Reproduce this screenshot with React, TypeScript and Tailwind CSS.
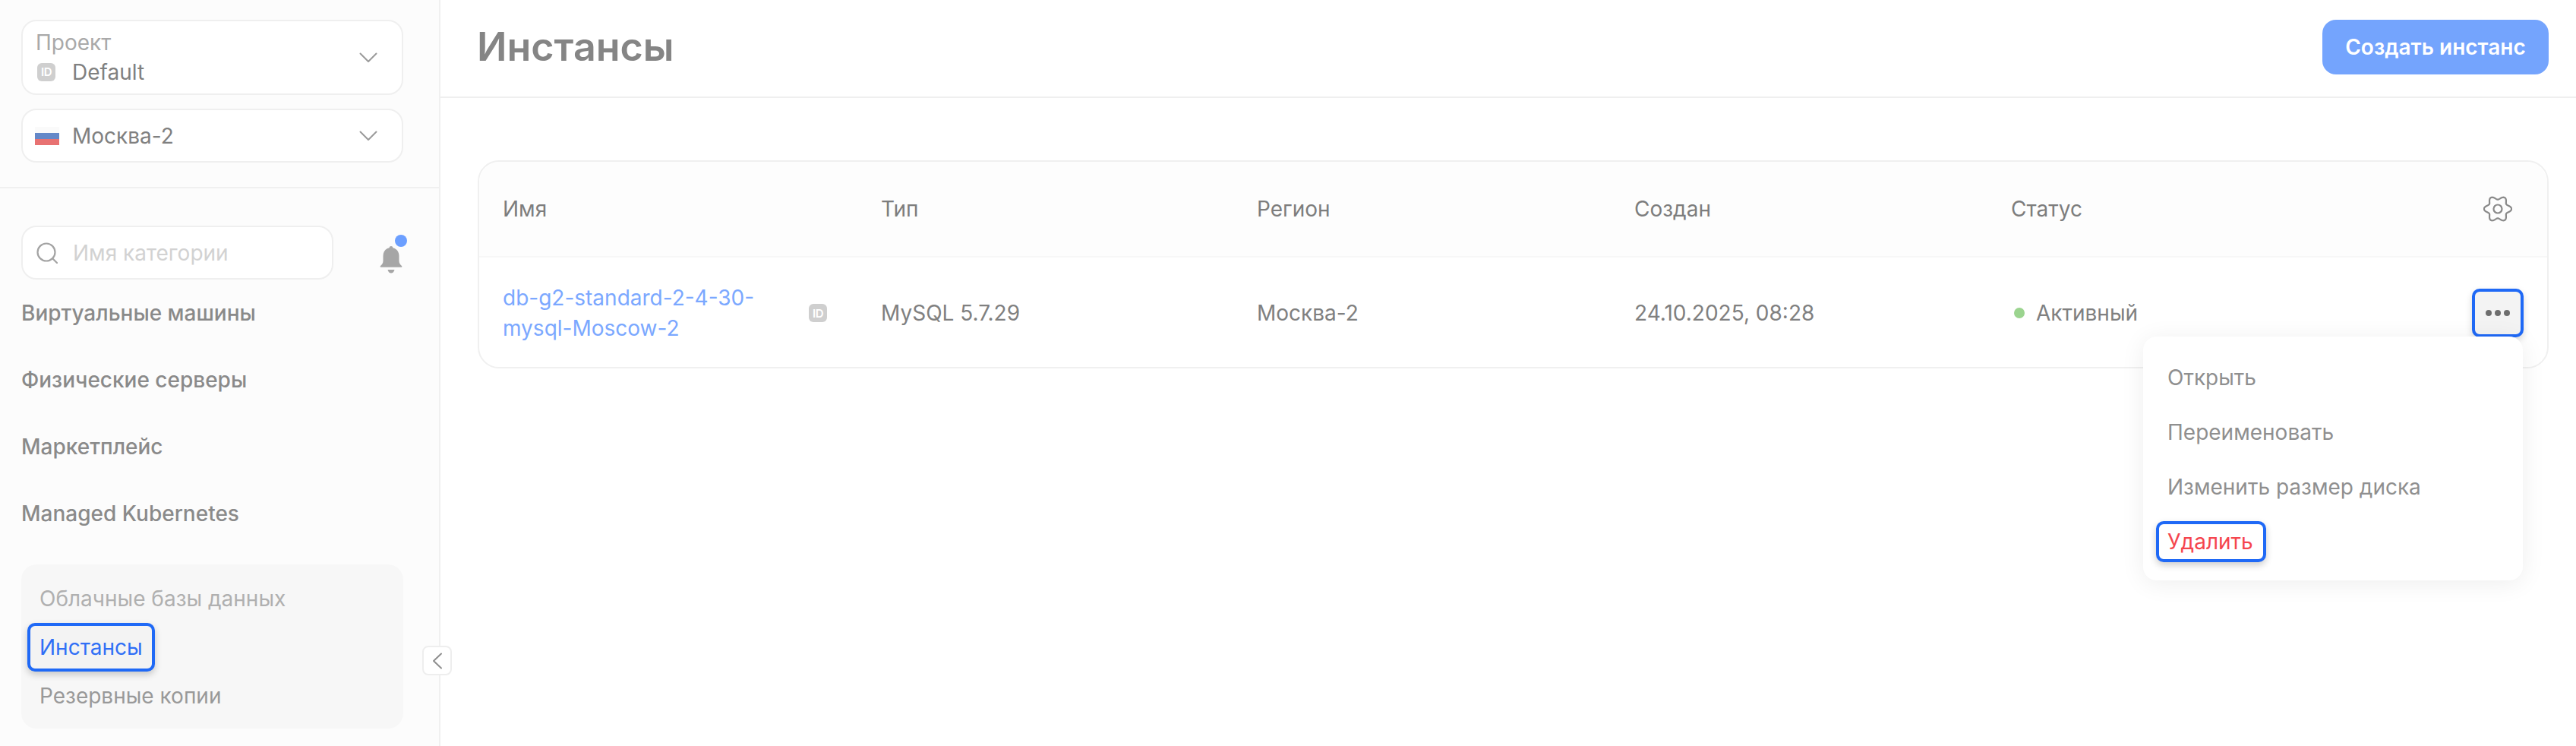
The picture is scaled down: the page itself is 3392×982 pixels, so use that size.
const IdBadge = ({ className }: { className: string }) => (
  <span className={`flex items-center justify-center rounded-[6px] bg-[#cfcfcf] text-[15px] font-semibold leading-none tracking-[-0.5px] text-white ${className}`}>ID</span>
);

const Chevron = () => (
  <svg width="24" height="14" viewBox="0 0 24 14" fill="none" className="shrink-0">
    <path d="M1.5 1.5 12 12 22.5 1.5" stroke="#9a9a9a" strokeWidth="2" strokeLinecap="round" strokeLinejoin="round" />
  </svg>
);

const NavRow = ({ label }: { label: string }) => (
  <div className="flex h-[88px] items-center text-[28px] font-medium text-[#8a8a8a]">{label}</div>
);

const gearPath = Array.from({ length: 120 }, (_, i) => {
  const t = (i / 120) * Math.PI * 2;
  const r = 15.5 + 2.6 * Math.cos(6 * t);
  return `${i === 0 ? "M" : "L"}${(19 + r * Math.cos(t)).toFixed(2)} ${(18 + r * 0.95 * Math.sin(t)).toFixed(2)}`;
}).join(" ") + "Z";

const Gear = () => (
  <svg width="38" height="36" viewBox="0 0 38 36" fill="none" className="shrink-0">
    <path d={gearPath} stroke="#8a8a8a" strokeWidth="2.2" strokeLinejoin="round" />
    <circle cx="19" cy="18" r="5.5" stroke="#8a8a8a" strokeWidth="2.2" />
  </svg>
);

export default function App() {
  return (
    <div className="relative flex h-[982px] w-[3392px] overflow-hidden bg-white font-['Inter',sans-serif]">
      <aside className="relative w-[580px] shrink-0 border-r-2 border-[#f0f0f0] bg-[#fcfcfc]">
        <div className="flex h-[248px] flex-col gap-[18px] border-b-2 border-[#f0f0f0] px-[28px] pt-[26px]">
          <div className="flex h-[99px] w-[503px] items-center justify-between rounded-[20px] border-2 border-[#efefef] bg-white pl-[17px] pr-[32px]">
            <div>
              <div className="text-[28px] leading-[34px] text-[#a9a9a9]">Проект</div>
              <div className="mt-[4px] flex items-center">
                <IdBadge className="ml-[2px] h-[24px] w-[24px]" />
                <span className="ml-[22px] text-[28px] leading-[36px] text-[#808080]">Default</span>
              </div>
            </div>
            <Chevron />
          </div>
          <div className="flex h-[71px] w-[503px] items-center justify-between rounded-[20px] border-2 border-[#efefef] bg-white pl-[16px] pr-[32px]">
            <div className="flex items-center">
              <div className="flex h-[24px] w-[32px] flex-col">
                <span className="h-[8px] bg-[#fafafa]" />
                <span className="h-[8px] bg-[#6488c8]" />
                <span className="h-[8px] bg-[#e87272]" />
              </div>
              <span className="ml-[17px] text-[28px] text-[#808080]">Москва-2</span>
            </div>
            <Chevron />
          </div>
        </div>
        <div className="px-[28px] pt-[49px]">
          <div className="flex items-center justify-between">
            <div className="flex h-[71px] w-[411px] items-center rounded-[20px] border-2 border-[#efefef] bg-white pl-[18px]">
              <svg width="28" height="28" viewBox="0 0 28 28" fill="none">
                <circle cx="13" cy="13" r="11.5" stroke="#a3a3a3" strokeWidth="2.2" />
                <path d="m22 22 5 5" stroke="#a3a3a3" strokeWidth="2.2" strokeLinecap="round" />
              </svg>
              <span className="ml-[20px] text-[28px] text-[#d2d2d2]">Имя категории</span>
            </div>
            <div className="relative mr-[20px] mt-[18px] h-[36px] w-[30px]">
              <svg width="30" height="36" viewBox="0 0 30 36" fill="none">
                <path d="M15 0c1.3 0 2.2.9 2.4 2.2C22.6 3.300 25.500 7.500 25.500 13v6.500c0 3 1.600 5 3.500 6.500.6.500.5 1.800-.5 1.800h-27c-1 0-1.100-1.300-.5-1.800 1.900-1.500 3.500-3.500 3.500-6.500V13c0-5.500 2.900-9.700 8.100-10.800C12.800.9 13.700 0 15 0Z" fill="#a6a6a6" />
                <path d="M10.500 31h9c-.8 3-2.400 4.500-4.500 4.500S11.300 34 10.500 31Z" fill="#a6a6a6" />
              </svg>
              <span className="absolute left-[20px] top-[-15px] h-[16px] w-[16px] rounded-full bg-[#6c9fff]" />
            </div>
          </div>
          <NavRow label="Виртуальные машины" />
          <NavRow label="Физические серверы" />
          <NavRow label="Маркетплейс" />
          <NavRow label="Managed Kubernetes" />
          <div className="mt-[23px] flex h-[216px] w-[503px] flex-col rounded-[20px] bg-[#f7f7f7] pl-[8px] pt-[13px]">
            <div className="flex h-[64px] items-center pl-[16px] text-[28px] text-[#b0b0b0]">Облачные базы данных</div>
            <div className="flex h-[64px] w-[168px] items-center rounded-[10px] border-[4px] border-[#1f69f6] bg-[#f3f3f3] pl-[12px] text-[28px] text-[#2f6ff6] shadow-[0_4px_10px_rgba(0,0,0,0.2)]">Инстансы</div>
            <div className="flex h-[64px] items-center pl-[16px] text-[28px] text-[#999999]">Резервные копии</div>
          </div>
        </div>
        <div className="absolute left-[556px] top-[850px] flex h-[39px] w-[39px] items-center justify-center rounded-[8px] border-2 border-[#eeeeee] bg-white">
          <svg width="14" height="22" viewBox="0 0 14 22" fill="none">
            <path d="M12 1.500 2 11l10 9.500" stroke="#8e8e8e" strokeWidth="2" strokeLinecap="round" strokeLinejoin="round" />
          </svg>
        </div>
      </aside>
      <main className="min-w-0 flex-1">
        <header className="flex h-[129px] items-start justify-between border-b-2 border-[#efefef] pl-[48px] pr-[36px] pt-[26px]">
          <h1 className="text-[52px] font-semibold leading-[72px] text-[#858585]">Инстансы</h1>
          <button className="h-[72px] w-[298px] rounded-[18px] bg-[#74a4fd] text-[28px] font-semibold text-white">Создать инстанс</button>
        </header>
        <div className="px-[36px] pl-[49px] pt-[82px]">
          <div className="relative h-[274px] rounded-[28px] border-2 border-[#f0f0f0] bg-white">
            <div className="grid h-[126px] grid-cols-[498px_495px_497px_496px_1fr] items-center rounded-t-[28px] border-b-2 border-[#f7f7f7] bg-[#fdfdfd] pl-[31px] text-[28px] text-[#7d7d7d]">
              <span>Имя</span>
              <span>Тип</span>
              <span>Регион</span>
              <span>Создан</span>
              <div className="flex items-center justify-between pr-[46px]">
                <span>Статус</span>
                <Gear />
              </div>
            </div>
            <div className="grid h-[146px] grid-cols-[498px_495px_497px_496px_1fr] items-center pl-[31px] text-[28px] text-[#808080]">
              <div className="flex items-center">
                <span className="w-[403px] text-[28px] leading-[40px] text-[#7ba8ff]">db-g2-standard-2-4-30-<br />mysql-Moscow-2</span>
                <IdBadge className="h-[24px] w-[24px]" />
              </div>
              <span>MySQL 5.7.29</span>
              <span>Москва-2</span>
              <span>24.10.2025, 08:28</span>
              <div className="flex items-center justify-between pr-[31px]">
                <span className="flex items-center"><span className="ml-[4px] mr-[15px] h-[14px] w-[14px] rounded-full bg-[#9bd48f]" />Активный</span>
                <span className="flex h-[64px] w-[68px] items-center justify-center gap-[4px] rounded-[10px] border-[4px] border-[#1f69f6] bg-[#f3f3f3] shadow-[0_4px_10px_rgba(0,0,0,0.15)]">
                  <i className="h-[8px] w-[8px] rounded-full bg-[#6e6e6e]" />
                  <i className="h-[8px] w-[8px] rounded-full bg-[#6e6e6e]" />
                  <i className="h-[8px] w-[8px] rounded-full bg-[#6e6e6e]" />
                </span>
              </div>
            </div>
            <div className="absolute left-[2191px] top-[230px] flex h-[321px] w-[500px] flex-col rounded-[18px] bg-white pl-[17px] pt-[18px] text-[28px] text-[#8f8f8f] shadow-[0_4px_32px_rgba(0,0,0,0.07)]">
              <div className="flex h-[72px] items-center pl-[15px]">Открыть</div>
              <div className="flex h-[72px] items-center pl-[15px]">Переименовать</div>
              <div className="flex h-[72px] items-center pl-[15px]">Изменить размер диска</div>
              <div className="mt-[9px] flex h-[54px] w-[145px] items-center rounded-[10px] border-[4px] border-[#1f69f6] bg-white pl-[11px] text-[#f5454e] shadow-[0_4px_10px_rgba(0,0,0,0.2)]">Удалить</div>
            </div>
          </div>
        </div>
      </main>
    </div>
  );
}
